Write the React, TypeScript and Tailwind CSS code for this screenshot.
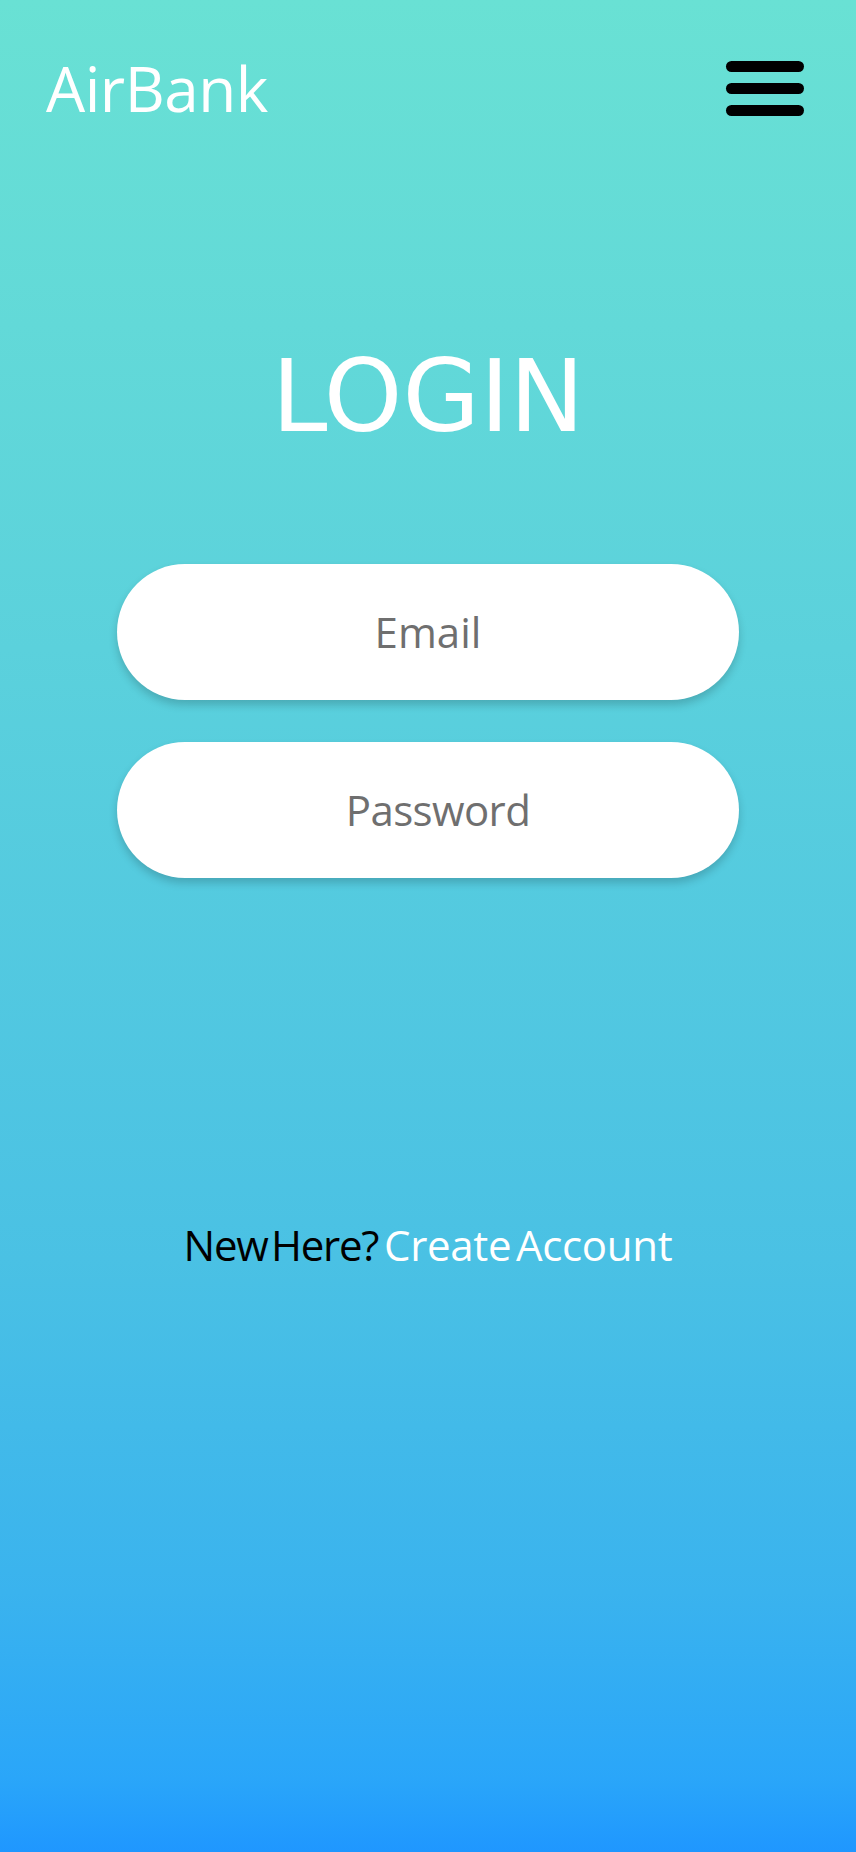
import React from "react";

export default function App() {
  return (
    <div className="min-h-screen w-full bg-[linear-gradient(180deg,#69e1d4_0%,#5bd1dc_35%,#4ac1e4_68%,#3ab3ee_86%,#2aa6f9_96%,#1f97ff_100%)] font-['Open_Sans',sans-serif]">
      <header className="flex items-center justify-between pl-[46px] pr-[52px] pt-[57px]">
        <div className="text-[62px] leading-none text-white tracking-[-0.5px]">AirBank</div>
        <button aria-label="menu" className="flex flex-col gap-[11px]">
          <span className="block h-[11px] w-[78px] rounded-full bg-black" />
          <span className="block h-[11px] w-[78px] rounded-full bg-black" />
          <span className="block h-[11px] w-[78px] rounded-full bg-black" />
        </button>
      </header>

      <h1 className="mt-[228px] text-center font-['DejaVu_Sans',sans-serif] text-[100px] leading-none text-white">
        LOGIN
      </h1>

      <div className="mx-auto mt-[117px] flex w-[622px] flex-col gap-[42px]">
        <div className="flex h-[136px] items-center justify-center rounded-full bg-white shadow-[0_5px_8px_rgba(0,0,0,0.18)]">
          <span className="text-[42px] leading-none text-[#6f6f6f]">Email</span>
        </div>
        <div className="flex h-[136px] items-center justify-center rounded-full bg-white pl-5 shadow-[0_5px_8px_rgba(0,0,0,0.18)]">
          <span className="text-[42px] leading-none tracking-[-0.6px] text-[#6f6f6f]">Password</span>
        </div>
      </div>

      <div className="mt-[346px] flex justify-center gap-[6px] text-[42px] leading-none [word-spacing:-6px]">
        <span className="text-black tracking-[-1.3px]">New Here?</span>
        <span className="text-white tracking-[-0.3px]">Create Account</span>
      </div>
    </div>
  );
}
